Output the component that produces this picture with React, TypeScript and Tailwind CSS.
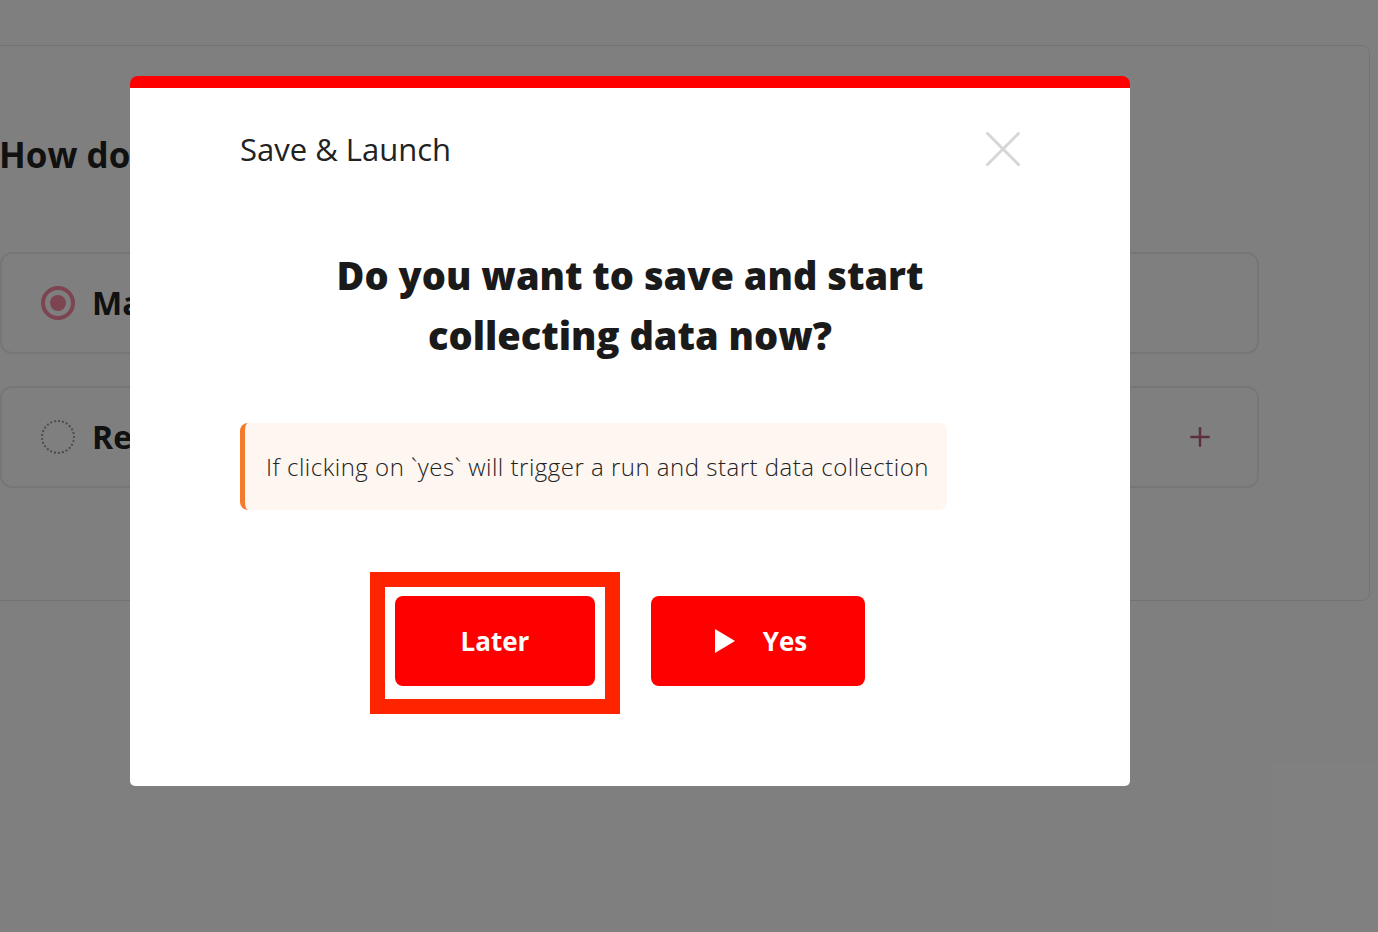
import { Plus } from "lucide-react";

export default function App() {
  return (
    <div className="relative w-full h-[932px] bg-white overflow-hidden font-['Open_Sans',sans-serif]">
      {/* page behind the dialog */}
      <div className="pt-[45px]">
        <div className="-ml-[40px] w-[1410px] h-[556px] border border-[#e6e6e6] rounded-lg pl-[38px] pr-[110px] pt-[89px]">
          <h2 className="text-[35px] leading-[40px] font-bold text-[#222]">
            How do you want to collect data?
          </h2>
          <div className="mt-[77px] flex flex-col gap-[32px] -ml-[38px] pl-[39px]">
            <div className="w-[1259px] h-[102px] border-2 border-[#ececec] rounded-xl flex items-center pl-[39px]">
              <span className="w-[34px] h-[34px] rounded-full border-[4px] border-[#f98aa2] flex items-center justify-center">
                <span className="w-[16px] h-[16px] rounded-full bg-[#f98aa2]" />
              </span>
              <span className="ml-[17px] text-[32px] font-bold text-[#222]">Manual</span>
            </div>
            <div className="w-[1259px] h-[102px] border-2 border-[#ececec] rounded-xl flex items-center pl-[39px] pr-[42px]">
              <span className="w-[34px] h-[34px] rounded-full border-2 border-dotted border-[#999]" />
              <span className="ml-[17px] text-[32px] font-bold text-[#222]">Recurring</span>
              <Plus size={30} strokeWidth={2} className="ml-auto text-[#b8637a]" />
            </div>
          </div>
        </div>
      </div>

      {/* overlay */}
      <div className="absolute inset-0 bg-black/50 pt-[76px] pl-[130px]">
        <div className="w-[1000px] h-[710px] bg-white rounded-t-lg rounded-b-[5px] border-t-[12px] border-[#ff0000] px-[110px] pt-[41px]">
          <div className="flex items-center justify-between">
            <h3 className="text-[31px] leading-[40px] text-[#222]">Save &amp; Launch</h3>
            <svg width="34" height="34" viewBox="0 0 34 34" className="stroke-[#d6d6d6]">
              <path d="M1.5 1.5 L32.5 32.5 M32.5 1.5 L1.5 32.5" strokeWidth="3" strokeLinecap="round" />
            </svg>
          </div>

          <div className="mt-[76px] text-center text-[38px] leading-[60px] font-extrabold text-[#1a1a1a]">
            Do you want to save and start
            <br />
            collecting data now?
          </div>

          <div className="mt-[58px] w-fit h-[87px] flex items-center bg-[#fdf6f1] border-l-[5px] border-[#f47a2c] rounded-lg pl-[21px] pr-[18px]">
            <p className="text-[24px] tracking-[0.5px] font-light text-[#222]">
              If clicking on `yes` will trigger a run and start data collection
            </p>
          </div>

          <div className="mt-[86px] flex justify-center gap-[56px]">
            <div className="relative">
              <div className="absolute -left-[25px] -top-[24px] w-[250px] h-[142px] border-[15px] border-[#ff2400]" />
              <button className="relative w-[200px] h-[90px] bg-[#ff0000] rounded-lg text-white text-[26px] font-bold">
                Later
              </button>
            </div>
            <button className="w-[214px] h-[90px] bg-[#ff0000] rounded-lg text-white text-[26px] font-bold flex items-center justify-center gap-[28px] pl-[6px]">
              <svg width="20" height="24" viewBox="0 0 20 24" className="fill-white">
                <path d="M0 0 L20 12 L0 24 Z" />
              </svg>
              <span>Yes</span>
            </button>
          </div>
        </div>
      </div>
    </div>
  );
}
